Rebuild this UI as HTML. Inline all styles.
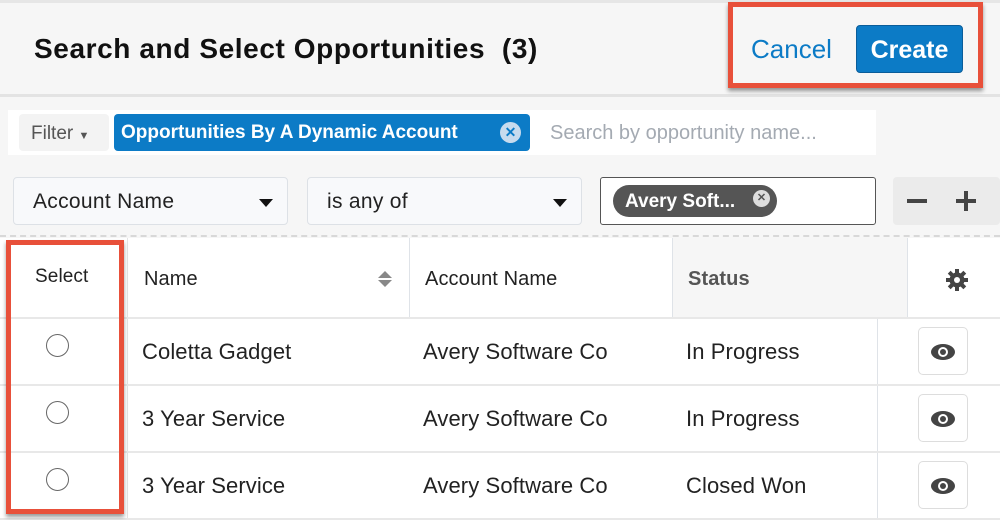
<!DOCTYPE html><html><head><style>
*{box-sizing:border-box;margin:0;padding:0}
body{width:1000px;height:520px;overflow:hidden;background:#f6f6f6;font-family:"Liberation Sans",sans-serif;color:#222;position:relative}
.a{position:absolute}
.dd{position:absolute;top:177px;height:48px;background:#f8f9fb;border:1px solid #dde1e6;border-radius:4px;font-size:21px;padding:12px 0 0 19px;letter-spacing:.3px}
.dd i{position:absolute;right:14px;top:21px;border-left:7px solid transparent;border-right:7px solid transparent;border-top:8px solid #111}
.tbl{position:absolute;left:0;top:238px;width:1000px;height:282px;background:#fff}
.cell{position:absolute;font-size:22px;letter-spacing:.1px}
.rad{position:absolute;left:46px;width:23px;height:23px;border:1.5px solid #666;border-radius:50%}
.eye{position:absolute;left:918px;width:50px;height:48px;border:1px solid #ddd;border-radius:5px;background:#fff}
.hl{position:absolute;left:0;width:1000px;height:2px;background:#e8e8e8}
</style></head><body>
<div class="a" style="left:0;top:0;width:1000px;height:3px;background:#e6e6e6"></div>
<div class="a" style="left:34px;top:33px;font-size:28px;font-weight:bold;color:#111;letter-spacing:.6px">Search and Select Opportunities&nbsp; (3)</div>
<div class="a" style="left:0;top:94px;width:1000px;height:3px;background:#e3e3e3"></div>
<div class="a" style="left:728px;top:2px;width:255px;height:86px;border:5px solid #e8503a;box-shadow:0 3px 4px rgba(0,0,0,.4)"></div>
<div class="a" style="left:751px;top:34px;font-size:26px;color:#0c7bc6">Cancel</div>
<div class="a" style="left:856px;top:25px;width:107px;height:48px;background:#0c7bc6;border:1px solid #0a5d9a;border-radius:4px;color:#fff;font-size:25px;font-weight:bold;text-align:center;line-height:48px">Create</div>
<div class="a" style="left:8px;top:110px;width:868px;height:45px;background:#fff"></div>
<div class="a" style="left:19px;top:114px;width:90px;height:37px;background:#f3f3f3;border-radius:4px;font-size:19px;color:#555;padding:9px 0 0 12px">Filter <span style="font-size:11px">▼</span></div>
<div class="a" style="left:114px;top:114px;width:416px;height:37px;background:#0c7bc6;border-radius:4px;color:#fff;font-size:19px;font-weight:bold;padding:8px 0 0 7px">Opportunities By A Dynamic Account<span style="position:absolute;left:386px;top:8px;width:21px;height:21px;border-radius:50%;background:#c7dbee;color:#0c7bc6;font-size:14px;text-align:center;line-height:21px">✕</span></div>
<div class="a" style="left:550px;top:122px;font-size:20px;color:#a4aab2">Search by opportunity name...</div>
<div class="dd" style="left:13px;width:275px">Account Name<i></i></div>
<div class="dd" style="left:307px;width:275px">is any of<i></i></div>
<div class="a" style="left:600px;top:177px;width:276px;height:48px;background:#fff;border:1px solid #555;border-radius:3px"></div>
<div class="a" style="left:613px;top:185px;width:164px;height:32px;background:#555;border-radius:16px;color:#fff;font-size:19px;font-weight:bold;padding:6px 0 0 12px">Avery Soft...<span style="position:absolute;left:140px;top:5px;width:17px;height:17px;border-radius:50%;background:#ddd;color:#555;font-size:11px;text-align:center;line-height:17px">✕</span></div>
<div class="a" style="left:893px;top:177px;width:107px;height:48px;background:#ebebeb;border-radius:4px"></div>
<div class="a" style="left:907px;top:199px;width:20px;height:4px;background:#444"></div>
<div class="a" style="left:956px;top:199px;width:20px;height:4px;background:#444"></div>
<div class="a" style="left:964px;top:191px;width:4px;height:20px;background:#444"></div>
<div class="a" style="left:0;top:235px;width:1000px;border-top:2px dashed #d8d8d8"></div>
<div class="tbl">
<div class="a" style="left:672px;top:0;width:235px;height:80px;background:#f6f6f6"></div>
<div class="a" style="left:127px;top:0;width:1px;height:282px;background:#e4e4e4"></div>
<div class="a" style="left:409px;top:0;width:1px;height:80px;background:#dfe3e8"></div>
<div class="a" style="left:672px;top:0;width:1px;height:80px;background:#dfe3e8"></div>
<div class="a" style="left:907px;top:0;width:1px;height:80px;background:#dfe3e8"></div>
<div class="a" style="left:877px;top:80px;width:1px;height:202px;background:#dfe3e8"></div>
<div class="hl" style="top:79px"></div><div class="hl" style="top:146px"></div><div class="hl" style="top:213px"></div><div class="hl" style="top:280px"></div>
<div class="cell" style="left:35px;top:28px;font-size:19px">Select</div>
<div class="cell" style="left:144px;top:30px;font-size:20px">Name</div>
<div class="a" style="left:378px;top:33px;border-left:7px solid transparent;border-right:7px solid transparent;border-bottom:7px solid #888"></div>
<div class="a" style="left:378px;top:42px;border-left:7px solid transparent;border-right:7px solid transparent;border-top:7px solid #888"></div>
<div class="cell" style="left:425px;top:30px;font-size:20px">Account Name</div>
<div class="cell" style="left:688px;top:30px;font-size:20px;font-weight:bold;color:#555">Status</div>
</div>
<div class="rad" style="top:334px"></div><div class="rad" style="top:401px"></div><div class="rad" style="top:468px"></div>
<div class="cell" style="left:142px;top:339px">Coletta Gadget</div><div class="cell" style="left:423px;top:339px">Avery Software Co</div><div class="cell" style="left:686px;top:339px">In Progress</div>
<div class="cell" style="left:142px;top:406px">3 Year Service</div><div class="cell" style="left:423px;top:406px">Avery Software Co</div><div class="cell" style="left:686px;top:406px">In Progress</div>
<div class="cell" style="left:142px;top:473px">3 Year Service</div><div class="cell" style="left:423px;top:473px">Avery Software Co</div><div class="cell" style="left:686px;top:473px">Closed Won</div>
<div class="eye" style="top:327px"></div><div class="eye" style="top:394px"></div><div class="eye" style="top:461px"></div>
<svg class="a" style="left:0;top:0" width="1000" height="520">
<g fill="#444"><g id="e"><ellipse cx="943" cy="352" rx="12" ry="8"/><circle cx="943" cy="352" r="5" fill="#fff"/><circle cx="943" cy="352" r="3"/></g>
<use href="#e" y="67"/><use href="#e" y="134"/>
<g transform="translate(957,280)"><circle r="7.5"/><g stroke="#444" stroke-width="4"><path d="M0-11V11M-11 0H11M-7.8-7.8L7.8 7.8M-7.8 7.8L7.8-7.8"/></g><circle r="3" fill="#fff"/></g></g></svg>
<div class="a" style="left:6px;top:240px;width:118px;height:274px;border:5px solid #e8503a;box-shadow:0 3px 4px rgba(0,0,0,.4)"></div>
</body></html>
